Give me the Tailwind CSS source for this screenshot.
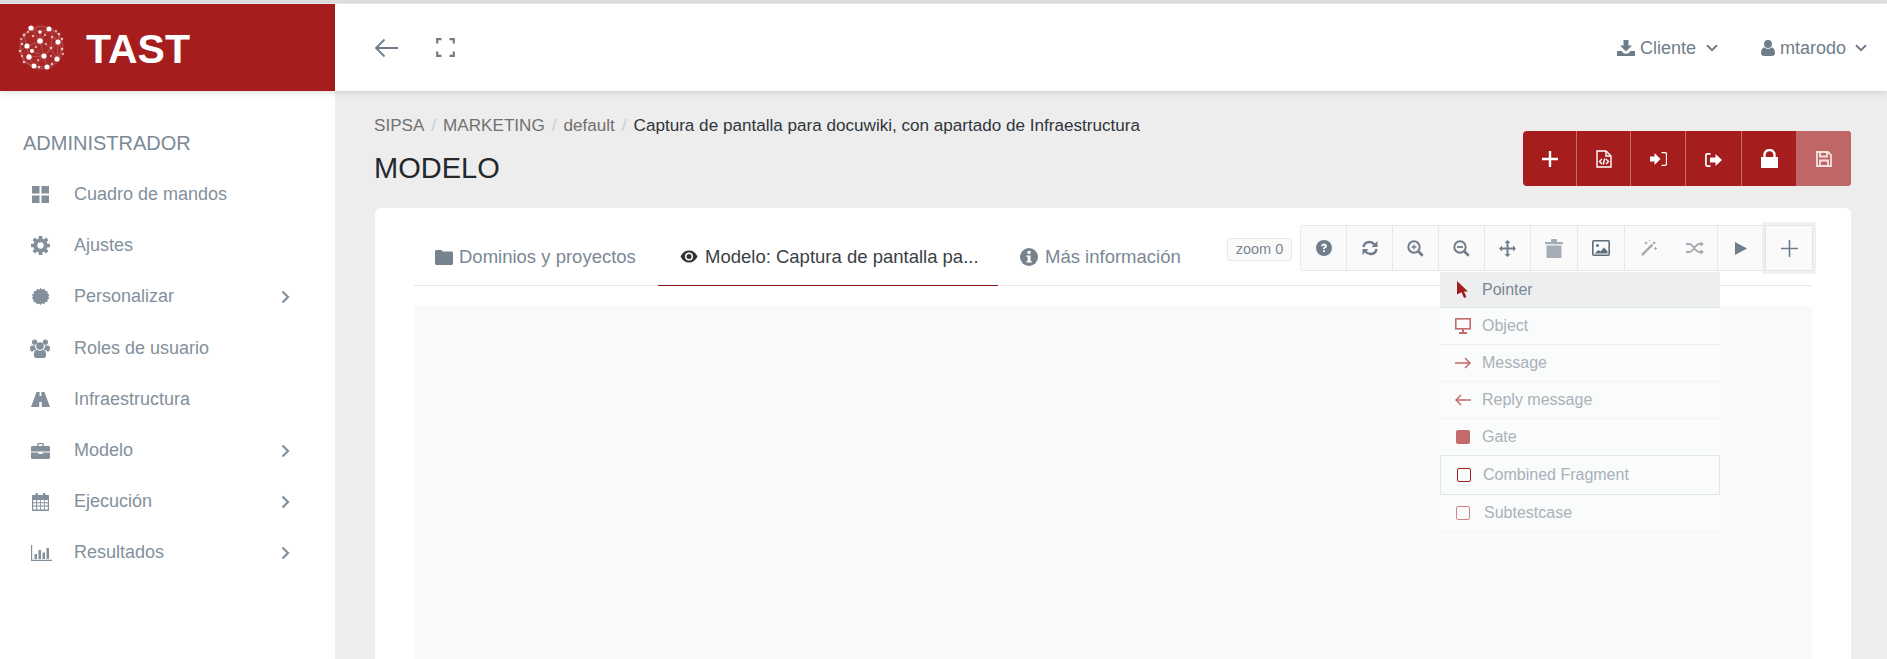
<!DOCTYPE html>
<html lang="es">
<head>
  <meta charset="UTF-8" />
  <meta name="viewport" content="width=device-width, initial-scale=1.0"/>
  <title>TAST - Modelo</title>
  <script src="https://cdn.jsdelivr.net/npm/@tailwindcss/browser@4"></script>
</head>
<body class="h-screen overflow-hidden bg-[#ededed] font-['Liberation_Sans',Arial,sans-serif]">
  <div class="h-[4px] bg-[#dedede] border-b border-[#eeeeee]"></div>
  <div class="flex h-[655px]">

    <!-- Sidebar -->
    <aside class="w-[335px] shrink-0 bg-white">
      <div class="h-[87px] bg-[#a51d1d] flex items-center pl-[18px] shadow-[0_2px_6px_rgba(0,0,0,0.12)] relative">
        <svg class="w-[47px] h-[47px]" viewBox="0 0 47 47" fill="#ffffff">
          <circle cx="23.500" cy="23.500" r="23" fill="#ffffff" fill-opacity="0.05"/>
          <g stroke="#ffffff" stroke-opacity="0.3" stroke-width="0.6" fill="none">
            <circle cx="23.500" cy="23.500" r="21"/>
            <path d="M13 4L22 17L31 5M22 17L9 22L11 33L26 32L40 18L31 5M11 33L16 42L29 43L26 32M40 18L39 35L29 43M9 22L2 27L6 38L16 42M22 17L26 32M13 4L6 11L9 22M31 5L41 10L40 18M39 35L44 25L40 18M22 17L33 24L39 35M14 27L26 32L16 42M9 22L14 27L22 17M33 24L26 32M22 8L13 4M22 8L31 5M22 8L22 17M33 24L34 13L40 18"/>
          </g>
          <circle cx="13" cy="4" r="2.600"/><circle cx="22" cy="8" r="1.700"/><circle cx="31" cy="5" r="2.500"/>
          <circle cx="22" cy="17" r="2.800"/><circle cx="40" cy="18" r="2.600"/><circle cx="9" cy="22" r="2.600"/>
          <circle cx="14" cy="27" r="2"/><circle cx="26" cy="32" r="2.600"/><circle cx="11" cy="33" r="2.700"/>
          <circle cx="39" cy="35" r="2.600"/><circle cx="16" cy="42" r="2.500"/><circle cx="29" cy="43" r="2.500"/>
          <g fill-opacity="0.7">
            <circle cx="6" cy="11" r="1.400"/><circle cx="4" cy="20" r="1.300"/><circle cx="2" cy="27" r="1.300"/>
            <circle cx="6" cy="38" r="1.300"/><circle cx="41" cy="10" r="1.300"/><circle cx="44" cy="25" r="1.300"/>
            <circle cx="33" cy="24" r="1.300"/><circle cx="34" cy="13" r="1.200"/><circle cx="21" cy="43" r="1.300"/>
            <circle cx="15" cy="12" r="1.200"/><circle cx="10" cy="8" r="1.100"/><circle cx="3" cy="15" r="1.100"/>
            <circle cx="27" cy="11" r="1.100"/><circle cx="38" cy="7" r="1.100"/><circle cx="44" cy="15" r="1.200"/>
            <circle cx="45" cy="30" r="1.100"/><circle cx="34" cy="40" r="1.200"/><circle cx="20" cy="36" r="1.100"/>
            <circle cx="4" cy="32" r="1.100"/><circle cx="33" cy="32" r="1"/><circle cx="18" cy="23" r="1"/>
            <circle cx="28" cy="20" r="1"/>
          </g>
        </svg>
        <span class="ml-[21px] pt-[3px] text-white font-bold text-[41px] leading-none">TAST</span>
      </div>

      <div class="pl-[23px] pt-[39px] text-[20px] leading-[26px] text-[#7c8a97]">ADMINISTRADOR</div>

      <nav class="mt-[13px] text-[18px] text-[#83909c]">
        <a class="flex items-center h-[51.2px] pl-[31px] pr-[45px]">
          <span class="w-[18px] flex justify-center"><svg class="w-[17px] h-[17px]" viewBox="0 0 17 17" fill="#83909c"><rect width="7.500" height="7.500"/><rect x="9.500" width="7.500" height="7.500"/><rect y="9.500" width="7.500" height="7.500"/><rect x="9.500" y="9.500" width="7.500" height="7.500"/></svg></span>
          <span class="ml-[25px]">Cuadro de mandos</span>
        </a>
        <a class="flex items-center h-[51.2px] pl-[31px] pr-[45px]">
          <span class="w-[18px] flex justify-center"><svg class="w-[19px] h-[19px] shrink-0" viewBox="0 0 24 24"><circle cx="12" cy="12" r="6.500" fill="none" stroke="#83909c" stroke-width="5"/><g stroke="#83909c" stroke-width="4.600"><path d="M12 0v5M12 19v5M0 12h5M19 12h5M3.500 3.500l3.600 3.600M16.900 16.900l3.600 3.600M3.500 20.500l3.600-3.600M16.900 7.100l3.600-3.600"/></g></svg></span>
          <span class="ml-[25px]">Ajustes</span>
        </a>
        <a class="flex items-center h-[51.2px] pl-[31px] pr-[45px]">
          <span class="w-[18px] flex justify-center"><svg class="w-[17px] h-[17px]" viewBox="0 0 24 24" fill="#83909c"><path d="M12 0l2.400 2.200 3-1.200 1.300 3 3.200.2-.1 3.200 2.800 1.600-1.500 2.900 1.500 2.900-2.800 1.600.1 3.200-3.200.2-1.300 3-3-1.200L12 24l-2.400-2.200-3 1.200-1.300-3-3.200-.2.1-3.200L-.1 15l1.500-2.900L-.1 9.200l2.800-1.600-.1-3.200 3.200-.2 1.300-3 3 1.200z"/></svg></span>
          <span class="ml-[25px]">Personalizar</span>
          <svg class="ml-auto w-[9px] h-[14px]" viewBox="0 0 9 14" fill="none" stroke="#83909c" stroke-width="2.200"><path d="M1.500 1.500L7 7l-5.500 5.500"/></svg>
        </a>
        <a class="flex items-center h-[51.2px] pl-[31px] pr-[45px]">
          <span class="w-[18px] flex justify-center"><svg class="w-[20px] h-[19px] shrink-0" viewBox="0 0 20 19" fill="#83909c"><circle cx="10" cy="7" r="3.800"/><circle cx="4.600" cy="3.200" r="2.600"/><circle cx="15.400" cy="3.200" r="2.600"/><path d="M0 8.500C0 6.800 2 6.400 4.800 6.600 5 8.400 5.600 9.800 6.600 10.600 4 11 2.800 12 2.400 12.800 1 12.600 0 11.600 0 8.500zM20 8.500c0-1.700-2-2.100-4.800-1.900-.2 1.800-.8 3.200-1.800 4 2.600.4 3.800 1.400 4.200 2.200 1.400-.2 2.400-1.200 2.400-4.300z"/><path d="M4 14.500c0-2.500 1.400-3.800 3-3.800.8.6 1.900 1 3 1s2.200-.4 3-1c1.600 0 3 1.300 3 3.800V17c0 1.200-1 2-2 2H6c-1 0-2-.8-2-2z"/></svg></span>
          <span class="ml-[25px]">Roles de usuario</span>
        </a>
        <a class="flex items-center h-[51.2px] pl-[31px] pr-[45px]">
          <span class="w-[18px] flex justify-center"><svg class="w-[19px] h-[15px] shrink-0" viewBox="0 0 19 15" fill="#83909c"><path d="M5.500 0H8.700L8.500 4H10.500L10.300 0H13.500L19 15H10.900L10.700 10H8.300L8.100 15H0z"/></svg></span>
          <span class="ml-[25px]">Infraestructura</span>
        </a>
        <a class="flex items-center h-[51.2px] pl-[31px] pr-[45px]">
          <span class="w-[18px] flex justify-center"><svg class="w-[19px] h-[16px] shrink-0" viewBox="0 0 19 16" fill="#83909c"><path d="M6 3V1.500C6 .6 6.600 0 7.500 0h4c.9 0 1.500.6 1.500 1.500V3h4.500c.9 0 1.500.6 1.500 1.500V8.500H0V4.500C0 3.600.6 3 1.500 3zM7.300 3h4.400V1.300H7.300z"/><path d="M0 9.500h7.500V11h4V9.500H19v5c0 .9-.6 1.500-1.500 1.500h-16C.6 16 0 15.400 0 14.500z"/></svg></span>
          <span class="ml-[25px]">Modelo</span>
          <svg class="ml-auto w-[9px] h-[14px]" viewBox="0 0 9 14" fill="none" stroke="#83909c" stroke-width="2.200"><path d="M1.500 1.500L7 7l-5.500 5.500"/></svg>
        </a>
        <a class="flex items-center h-[51.2px] pl-[31px] pr-[45px]">
          <span class="w-[18px] flex justify-center"><svg class="w-[17px] h-[18px] shrink-0" viewBox="0 0 17 18" fill="#83909c"><path fill-rule="evenodd" d="M1 2h2.500V1c0-1.300 2.500-1.300 2.500 0v1h5V1c0-1.300 2.500-1.300 2.500 0v1H16c.6 0 1 .4 1 1v14c0 .6-.4 1-1 1H1c-.6 0-1-.4-1-1V3c0-.6.4-1 1-1zM1.200 7v2.300h3V7zm4 0v2.300h3V7zm3.800 0v2.300h3V7zm3.800 0v2.300h3V7zM1.200 10.200v2.300h3v-2.300zm4 0v2.300h3v-2.300zm3.800 0v2.300h3v-2.300zm3.800 0v2.300h3v-2.300zM1.200 13.400v3.200h3v-3.200zm4 0v3.200h3v-3.200zm3.800 0v3.200h3v-3.200zm3.800 0v3.200h3v-3.200z"/></svg></span>
          <span class="ml-[25px]">Ejecución</span>
          <svg class="ml-auto w-[9px] h-[14px]" viewBox="0 0 9 14" fill="none" stroke="#83909c" stroke-width="2.200"><path d="M1.500 1.500L7 7l-5.500 5.500"/></svg>
        </a>
        <a class="flex items-center h-[51.2px] pl-[31px] pr-[45px]">
          <span class="w-[18px] flex justify-center"><svg class="w-[21px] h-[16px] shrink-0 ml-[3px]" viewBox="0 0 21 16" fill="#83909c"><path d="M0 0h1.200v14.800H21V16H0z"/><rect x="3.500" y="9" width="2.500" height="5"/><rect x="7.500" y="5" width="2.500" height="9"/><rect x="11.500" y="7.500" width="2.500" height="6.500"/><rect x="15.500" y="3" width="2.500" height="11"/></svg></span>
          <span class="ml-[25px]">Resultados</span>
          <svg class="ml-auto w-[9px] h-[14px]" viewBox="0 0 9 14" fill="none" stroke="#83909c" stroke-width="2.200"><path d="M1.500 1.500L7 7l-5.500 5.500"/></svg>
        </a>
      </nav>
    </aside>

    <!-- Main -->
    <main class="flex-1 min-w-0 flex flex-col">
      <header class="h-[87px] shrink-0 bg-white flex items-center pl-[39px] pr-[20px] shadow-[0_2px_6px_rgba(0,0,0,0.12)] relative text-[18px] text-[#6f7d8b]">
        <svg class="w-[25px] h-[20px]" viewBox="0 0 25 20" fill="none" stroke="#6f7d8b" stroke-width="1.800"><path d="M24 10H2M10.500 1.500L2 10l8.500 8.500"/></svg>
        <svg class="ml-[37px] w-[19px] h-[19px] -mt-[1px]" viewBox="0 0 19 19" fill="none" stroke="#6f7d8b" stroke-width="2.200"><path d="M1.200 5.500V1.200H5.500M13.500 1.200h4.300V5.500M17.800 13.500v4.300H13.500M5.500 17.800H1.200V13.500"/></svg>

        <div class="ml-auto flex items-center pt-[1px]">
          <svg class="w-[18px] h-[16px]" viewBox="0 0 18 16" fill="#6f7d8b"><path d="M6.500 0h5v5.500H15L9 11.500 3 5.500h3.500z"/><path d="M0 11h4.500L7 13.500h4L13.500 11H18v5H0z"/></svg>
          <span class="ml-[5px]">Cliente</span>
          <svg class="ml-[10px] w-[12px] h-[8px]" viewBox="0 0 12 8" fill="none" stroke="#6f7d8b" stroke-width="2"><path d="M1 1.200l5 5 5-5"/></svg>
          <svg class="ml-[43px] w-[14px] h-[16px]" viewBox="0 0 14 16" fill="#6f7d8b"><circle cx="7" cy="4" r="4"/><path d="M0 13c0-3.500 1.500-5.500 3.500-5.500C4.500 8.300 5.700 8.800 7 8.800s2.500-.5 3.500-1.300c2 0 3.500 2 3.500 5.500 0 2-1.200 3-2.700 3H2.700C1.200 16 0 15 0 13z"/></svg>
          <span class="ml-[5px]">mtarodo</span>
          <svg class="ml-[9px] w-[12px] h-[8px]" viewBox="0 0 12 8" fill="none" stroke="#6f7d8b" stroke-width="2"><path d="M1 1.200l5 5 5-5"/></svg>
        </div>
      </header>

      <div class="flex-1 min-h-0 pl-[39px] pr-[36px] flex flex-col">
        <div class="flex justify-between items-start h-[117px]">
          <div>
            <ol class="flex items-center pt-[25px] text-[17.100px] leading-[20px] text-[#73706e]">
              <li>SIPSA</li>
              <li class="px-[7px] text-[#c9cdd1]">/</li>
              <li>MARKETING</li>
              <li class="px-[7px] text-[#c9cdd1]">/</li>
              <li>default</li>
              <li class="px-[7px] text-[#c9cdd1]">/</li>
              <li class="text-[#2f353b]">Captura de pantalla para docuwiki, con apartado de Infraestructura</li>
            </ol>
            <h1 class="mt-[16px] text-[29px] leading-[32px] text-[#23282e]">MODELO</h1>
          </div>
          <div class="mt-[40px] flex h-[55px] w-[328px] rounded-[4px] overflow-hidden bg-[#a51d1d]">
            <button class="w-[54px] flex items-center justify-center border-r border-[#c96a6a]"><svg class="w-[18px] h-[18px]" viewBox="0 0 18 18" stroke="#ffffff" stroke-width="2.400"><path d="M9 1v16M1 9h16"/></svg></button>
            <button class="w-[54px] flex items-center justify-center border-r border-[#c96a6a]"><svg class="w-[16px] h-[18px]" viewBox="0 0 16 18" fill="none" stroke="#ffffff" stroke-width="1.400"><path d="M1 1h9l5 5v11H1z"/><path d="M10 1v5h5M6 9l-2.500 2.500L6 14M10 9l2.500 2.500L10 14M8.800 8.500l-1.600 6"/></svg></button>
            <button class="w-[55px] flex items-center justify-center border-r border-[#c96a6a]"><svg class="w-[17px] h-[14px]" viewBox="0 0 17 14" fill="#ffffff"><path d="M0 4.500h4.500V1l6 6-6 6V9.500H0z"/><path d="M11.500 .7h3.500c1 0 1.500.7 1.500 1.500v9.600c0 .8-.5 1.500-1.500 1.500h-3.500" fill="none" stroke="#ffffff" stroke-width="1.300"/></svg></button>
            <button class="w-[56px] flex items-center justify-center border-r border-[#c96a6a] pt-[3px]"><svg class="w-[17px] h-[14px]" viewBox="0 0 17 14" fill="#ffffff"><path d="M5.500 .9H2.200C1.300 .9.900 1.600.9 2.200v9.600c0 .6.400 1.300 1.300 1.300h3.300" fill="none" stroke="#ffffff" stroke-width="1.700"/><path d="M5 4.500h5.500V1l6.500 6-6.500 6V9.500H5z"/></svg></button>
            <button class="w-[54px] flex items-center justify-center"><svg class="w-[17px] h-[19px]" viewBox="0 0 17 19"><path d="M0 8h17v11H0z" fill="#ffffff"/><path d="M3.500 9V6a5 5 0 0 1 10 0v3" fill="none" stroke="#ffffff" stroke-width="2.400"/></svg></button>
            <button class="w-[55px] flex items-center justify-center bg-[#bf6767]"><svg class="w-[16px] h-[16px]" viewBox="0 0 16 16" fill="none" stroke="#f5e3e3" stroke-width="1.800"><path d="M1 1h11l3 3v11H1z"/><path d="M4 1v4.500h7V1M4 15v-5.500h8V15"/></svg></button>
          </div>
        </div>

        <!-- Card -->
        <section class="flex-1 min-h-0 ml-[1px] bg-white rounded-t-[6px] px-[39px] pt-[17px] relative flex flex-col">
          <div class="flex items-start shrink-0 h-[61px] border-b border-[#e6e6e6] text-[18.500px] relative">
            <a class="flex items-center h-[61px] pt-[3px] w-[244px] pl-[21px] text-[#7b8794]">
              <svg class="w-[18px] h-[15px]" viewBox="0 0 18 15" fill="#76838f"><path d="M1.500 0h4.500c.8 0 1.300.5 1.500 1.500H16.500c.9 0 1.500.6 1.500 1.500v10.500c0 .9-.6 1.500-1.500 1.500h-15C.6 15 0 14.400 0 13.500v-12C0 .6.600 0 1.500 0z"/></svg>
              <span class="ml-[6px]">Dominios y proyectos</span>
            </a>
            <a class="flex items-center h-[61px] pt-[3px] w-[340px] pl-[22px] text-[#3a3f45] border-b border-[#8a1717]">
              <svg class="w-[18px] h-[13px]" viewBox="0 0 18 13"><path d="M.5 6.500C2.500 2.500 5.500 .5 9 .5s6.500 2 8.500 6c-2 4-5 6-8.500 6s-6.500-2-8.500-6z" fill="#333333"/><circle cx="9" cy="6.500" r="4" fill="#ffffff"/><circle cx="9" cy="6.500" r="2.500" fill="#333333"/></svg>
              <span class="ml-[7px]">Modelo: Captura de pantalla pa...</span>
            </a>
            <a class="flex items-center h-[61px] pt-[3px] pl-[22px] text-[#7b8794]">
              <svg class="w-[18px] h-[18px]" viewBox="0 0 18 18"><circle cx="9" cy="9" r="9" fill="#76838f"/><rect x="7.500" y="3" width="3" height="2.800" fill="#ffffff"/><path d="M6.500 7.500h4v5.500h1.200v1.600H6.500V13h1.200V9H6.500z" fill="#ffffff"/></svg>
              <span class="ml-[7px]">Más información</span>
            </a>
            <span class="absolute left-[813px] top-[13px] h-[23px] w-[65px] flex items-center justify-center bg-[#fafafa] border border-[#e4e8ea] rounded-[3px] text-[14.500px] text-[#7b8794]">zoom 0</span>

            <!-- Toolbar -->
            <div class="absolute right-[-1px] top-0 flex h-[46px] bg-[#fafafa] border border-[#e4e8ea] rounded-l-[3px] w-[513px]">
              <button class="w-[46px] flex items-center justify-center border-r border-[#e4e8ea]"><svg class="w-[16px] h-[16px]" viewBox="0 0 16 16"><circle cx="8" cy="8" r="8" fill="#6f7d8b"/><path d="M5.200 6.200C5.300 4.500 6.500 3.500 8.100 3.500c1.600 0 2.800 1 2.800 2.400 0 1.100-.6 1.600-1.400 2.100-.6.400-.7.600-.7 1.100H7.100c0-1.100.3-1.600 1-2.100.6-.4.900-.6.900-1 0-.5-.4-.8-.9-.8-.6 0-1 .4-1.100 1z" fill="#ffffff"/><rect x="7.100" y="10.200" width="1.800" height="1.800" fill="#ffffff"/></svg></button>
              <button class="w-[46px] flex items-center justify-center border-r border-[#e4e8ea]"><svg class="w-[16px] h-[16px]" viewBox="0 0 16 16" fill="none" stroke="#6f7d8b" stroke-width="2.400"><path d="M1.500 7C2 4 4.500 2 7.500 2c2.300 0 3.800 1 5 2.500M14.500 9c-.5 3-3 5-6 5-2.300 0-3.800-1-5-2.500"/><path d="M15.500 1v6h-6zM.5 15V9h6z" fill="#6f7d8b" stroke="none"/></svg></button>
              <button class="w-[46px] flex items-center justify-center border-r border-[#e4e8ea]"><svg class="w-[17px] h-[17px]" viewBox="0 0 17 17" fill="none" stroke="#6f7d8b"><circle cx="7" cy="7" r="5.700" stroke-width="2"/><path d="M11.500 11.500L15.700 15.700" stroke-width="2.800"/><path d="M7 4.500v5M4.500 7h5" stroke-width="1.300"/></svg></button>
              <button class="w-[46px] flex items-center justify-center border-r border-[#e4e8ea]"><svg class="w-[17px] h-[17px]" viewBox="0 0 17 17" fill="none" stroke="#6f7d8b"><circle cx="7" cy="7" r="5.700" stroke-width="2"/><path d="M11.500 11.500L15.700 15.700" stroke-width="2.800"/><path d="M4 7h6" stroke-width="1.800"/></svg></button>
              <button class="w-[46px] flex items-center justify-center border-r border-[#e4e8ea]"><svg class="w-[17px] h-[17px]" viewBox="0 0 17 17" fill="#6f7d8b"><path d="M8.500 0l3 3H9.500v4.500H14v-2l3 3-3 3v-2H9.500V14h2l-3 3-3-3h2V9.500H3v2l-3-3 3-3v2h4.500V3h-2z"/></svg></button>
              <button class="w-[47px] flex items-center justify-center border-r border-[#e4e8ea]"><svg class="w-[18px] h-[19px]" viewBox="0 0 18 19" fill="#a4adb5"><path d="M0 3h18v2.200H0zM6 3V1.200C6 .5 6.500 0 7.200 0h3.600c.7 0 1.200.5 1.200 1.200V3z"/><path d="M1.500 6.500h15V18c0 .6-.4 1-1 1h-13c-.6 0-1-.4-1-1z"/></svg></button>
              <button class="w-[47px] flex items-center justify-center border-r border-[#e4e8ea]"><svg class="w-[18px] h-[16px]" viewBox="0 0 18 16"><rect x=".8" y=".8" width="16.400" height="14.400" rx="1" fill="none" stroke="#5d6c7b" stroke-width="1.600"/><circle cx="5.500" cy="5.500" r="1.500" fill="#5d6c7b"/><path d="M2.500 13.500l4-3.500 2 1.500L12 7.500l3.500 4v2z" fill="#5d6c7b"/></svg></button>
              <button class="w-[47px] flex items-center justify-center"><svg class="w-[16px] h-[16px]" viewBox="0 0 16 16" fill="#a4adb5"><path d="M0 14.200L10.500 3.700 12.300 5.500 1.800 16z"/><path d="M11.500 2.700l1.500-1.500 1.800 1.800-1.500 1.500z"/><path d="M4.500 1.500h1v1h1v1h-1v1h-1v-1h-1v-1h1zM14 7h1v1h1v1h-1v1h-1V9h-1V8h1zM8 0h1v1H8z"/></svg></button>
              <button class="w-[46px] flex items-center justify-center border-r border-[#e4e8ea]"><svg class="w-[18px] h-[14px]" viewBox="0 0 18 14" fill="none" stroke="#a4adb5" stroke-width="1.800"><path d="M0 3h3.500c3.500 0 6 8 9.500 8h2M0 11h3.500c3.500 0 6-8 9.500-8h2"/><path d="M14.500 .2L18 3l-3.500 2.800zM14.500 8.200L18 11l-3.500 2.800z" fill="#a4adb5" stroke="none"/></svg></button>
              <button class="w-[45px] flex items-center justify-center"><svg class="w-[12px] h-[13px]" viewBox="0 0 12 13" fill="#6f7d8b"><path d="M0 0l12 6.500L0 13z"/></svg></button>
            </div>
            <button class="absolute right-[-1px] top-0 w-[48px] h-[46px] flex items-center justify-center bg-[#fafafa] border border-[#dfe5e8] shadow-[0_0_0_3px_rgba(225,232,236,0.6)]"><svg class="w-[17px] h-[17px]" viewBox="0 0 17 17" stroke="#6f7d8b" stroke-width="1.600"><path d="M8.500 0v17M0 8.500h17"/></svg></button>
          </div>

          <div class="mt-[20px] flex-1 min-h-0 bg-[#f9f9f9]"></div>

          <!-- Dropdown -->
          <ul class="absolute left-[1065px] top-[64px] w-[280px] text-[16px] text-[#a9b1b9] bg-[#fafbfb]">
            <li class="flex items-center h-[36px] bg-[#edeef0] border-b border-[#e0e3e6] text-[#7b8794]">
              <svg class="ml-[17px] w-[11px] h-[17px]" viewBox="0 0 11 17" fill="#a51d1d"><path d="M0 0l11 10.500H7l2.500 5.500-2.500 1-2.500-5.800L0 13.500z"/></svg>
              <span class="ml-[14px]">Pointer</span>
            </li>
            <li class="flex items-center h-[37px] border-b border-[#eceef0]">
              <svg class="ml-[15px] w-[16px] h-[16px]" viewBox="0 0 16 16" fill="none" stroke="#c46a6a" stroke-width="1.600"><rect x=".8" y=".8" width="14.400" height="10"/><path d="M8 11v3M4 15h8" stroke-width="2"/></svg>
              <span class="ml-[11px]">Object</span>
            </li>
            <li class="flex items-center h-[37px] border-b border-[#f2f3f4]">
              <svg class="ml-[15px] w-[16px] h-[12px]" viewBox="0 0 16 12" fill="none" stroke="#c46a6a" stroke-width="1.500"><path d="M0 6h15M10 1l5 5-5 5"/></svg>
              <span class="ml-[11px]">Message</span>
            </li>
            <li class="flex items-center h-[37px] border-b border-[#f2f3f4]">
              <svg class="ml-[15px] w-[16px] h-[12px]" viewBox="0 0 16 12" fill="none" stroke="#c46a6a" stroke-width="1.500"><path d="M16 6H1M6 1L1 6l5 5"/></svg>
              <span class="ml-[11px]">Reply message</span>
            </li>
            <li class="flex items-center h-[36px]">
              <span class="ml-[16px] w-[14px] h-[14px] rounded-[2px] bg-[#c46a6a]"></span>
              <span class="ml-[12px]">Gate</span>
            </li>
            <li class="flex items-center h-[40px] border border-[#e3e7ea]">
              <span class="ml-[16px] w-[14px] h-[14px] rounded-[2px] border border-[#a51d1d]"></span>
              <span class="ml-[12px]">Combined Fragment</span>
            </li>
            <li class="flex items-center h-[37px] border-b border-[#f4f5f6]">
              <span class="ml-[16px] w-[14px] h-[14px] rounded-[2px] border border-[#cf8585]"></span>
              <span class="ml-[14px]">Subtestcase</span>
            </li>
          </ul>
        </section>
      </div>
    </main>
  </div>
</body>
</html>
